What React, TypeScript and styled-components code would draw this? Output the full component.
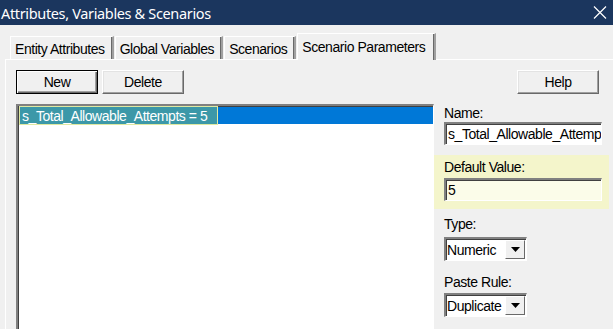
import React from "react";
import styled, { createGlobalStyle } from "styled-components";

const GlobalStyle = createGlobalStyle`
  html, body {
    margin: 0;
    padding: 0;
    background: #f0f0f0;
    overflow: hidden;
  }
`;

const Window = styled.div`
  width: 613px;
  height: 329px;
  display: flex;
  flex-direction: column;
  background: #f0f0f0;
  font-family: "Liberation Sans", Arial, sans-serif;
  font-size: 14px;
  letter-spacing: -0.45px;
  color: #000;
  overflow: hidden;
`;

const TitleBar = styled.div`
  height: 25px;
  flex: none;
  background: #1b365e;
  color: #fff;
  display: flex;
  align-items: center;
  justify-content: space-between;
  padding: 0 6px 0 1px;
  font-family: "Noto Sans", "Open Sans", sans-serif;
  font-size: 14.5px;
  letter-spacing: -0.35px;
`;

const CloseIcon = () => (
  <svg width="14" height="13" viewBox="0 0 14 13">
    <path d="M1 0.5 L13 12.5 M13 0.5 L1 12.5" stroke="#fff" strokeWidth="1.2" />
  </svg>
);

const Body = styled.div`
  flex: 1;
  display: flex;
  flex-direction: column;
  padding: 8px 0 0 5px;
  min-height: 0;
`;

const TabStrip = styled.div`
  height: 26px;
  flex: none;
  display: flex;
  align-items: flex-end;
  padding-left: 5px;
  position: relative;
  z-index: 1;
`;

const Tab = styled.div<{ $active?: boolean }>`
  box-sizing: border-box;
  height: ${(p) => (p.$active ? "27px" : "23px")};
  margin-bottom: ${(p) => (p.$active ? "-1px" : "0")};
  padding: ${(p) => (p.$active ? "0 9px 0 4px" : "2px 7px 0 4px")};
  margin-right: ${(p) => (p.$active ? "0" : "1px")};
  display: flex;
  align-items: center;
  background: #f0f0f0;
  border-top: 1px solid #fff;
  border-left: 1px solid #fff;
  border-right: 2px solid #a0a0a0;
  box-shadow: inset -1px 0 0 #696969;
  white-space: nowrap;
`;

const TabPanel = styled.div`
  flex: 1;
  display: flex;
  flex-direction: column;
  border-top: 1px solid #fff;
  border-left: 1px solid #fff;
  padding: 10px 0 0 10px;
  min-height: 0;
`;

const ToolRow = styled.div`
  display: flex;
  align-items: center;
  gap: 4px;
  padding-right: 14px;
`;

const Spacer = styled.div`
  flex: 1;
`;

const Button = styled.div<{ $default?: boolean }>`
  box-sizing: border-box;
  width: 82px;
  height: 24px;
  display: flex;
  align-items: center;
  justify-content: center;
  background: #f0f0f0;
  border: 1px solid ${(p) => (p.$default ? "#000" : "#fff")};
  border-right-color: ${(p) => (p.$default ? "#000" : "#696969")};
  border-bottom-color: ${(p) => (p.$default ? "#000" : "#696969")};
  box-shadow: ${(p) =>
    p.$default
      ? "inset 1px 1px 0 #fff, inset -1px -1px 0 #696969, inset -2px -2px 0 #a0a0a0"
      : "inset -1px -1px 0 #a0a0a0, inset 1px 1px 0 #e3e3e3"};
`;

const ContentRow = styled.div`
  flex: 1;
  display: flex;
  margin-top: 10px;
  min-height: 0;
`;

const ListBox = styled.div`
  box-sizing: border-box;
  width: 418px;
  flex: none;
  background: #fff;
  border-top: 2px solid #808080;
  border-left: 2px solid #808080;
  border-right: 1px solid #fff;
  box-shadow: inset 1px 1px 0 #404040;
  padding: 1px 0 0 2px;
  margin-bottom: -10px;
`;

const ListRow = styled.div<{ $selected?: boolean }>`
  height: 17px;
  display: flex;
  background: ${(p) => (p.$selected ? "#0078d7" : "transparent")};
  color: ${(p) => (p.$selected ? "#fff" : "#000")};
`;

const ListText = styled.span`
  display: flex;
  align-items: center;
  padding: 0 10px 0 2px;
  background: #3c98a8;
  box-shadow: 0 0 0 1px #dfe9a2;
  white-space: nowrap;
`;

const Side = styled.div`
  flex: 1;
  display: flex;
  flex-direction: column;
  padding: 0 4px 0 0;
`;

const Field = styled.div<{ $highlight?: boolean; $gap?: number; $after?: number }>`
  display: flex;
  flex-direction: column;
  align-items: flex-start;
  gap: ${(p) => p.$gap ?? 0}px;
  padding: ${(p) => (p.$highlight ? "3px 0 8px 10px" : "0 0 0 10px")};
  margin-bottom: ${(p) => p.$after ?? 0}px;
  background: ${(p) => (p.$highlight ? "#f4f5cb" : "transparent")};
`;

const Label = styled.div`
  height: 18px;
  line-height: 18px;
`;

const TextBox = styled.div<{ $tint?: boolean }>`
  box-sizing: border-box;
  width: 158px;
  height: 23px;
  display: flex;
  align-items: center;
  padding-left: 2px;
  overflow: hidden;
  white-space: nowrap;
  background: ${(p) => (p.$tint ? "#fbfce9" : "#fff")};
  border-top: 2px solid #808080;
  border-left: 2px solid #808080;
  border-right: 1px solid #fff;
  border-bottom: 1px solid #fff;
  box-shadow: inset 1px 1px 0 #404040;
`;

const Combo = styled.div`
  box-sizing: border-box;
  width: 83px;
  height: 24px;
  display: flex;
  align-items: stretch;
  background: #fff;
  border-top: 2px solid #808080;
  border-left: 2px solid #808080;
  border-right: 1px solid #fff;
  border-bottom: 1px solid #fff;
  box-shadow: inset 1px 1px 0 #404040;
`;

const ComboText = styled.div`
  flex: 1;
  display: flex;
  align-items: center;
  padding-left: 1px;
  overflow: hidden;
  white-space: nowrap;
`;

const ComboArrow = styled.div`
  width: 18px;
  margin: 1px 1px 1px 0;
  display: flex;
  align-items: center;
  justify-content: center;
  background: #f0f0f0;
  border: 1px solid #fff;
  border-right-color: #696969;
  border-bottom-color: #696969;
`;

const Arrow = () => (
  <svg width="9" height="5" viewBox="0 0 9 5">
    <path d="M0 0 H9 L4.5 5 Z" fill="#000" />
  </svg>
);

export default function App() {
  return (
    <>
      <GlobalStyle />
      <Window>
        <TitleBar>
          <span>Attributes, Variables &amp; Scenarios</span>
          <CloseIcon />
        </TitleBar>
        <Body>
          <TabStrip>
            <Tab>Entity Attributes</Tab>
            <Tab>Global Variables</Tab>
            <Tab>Scenarios</Tab>
            <Tab $active>Scenario Parameters</Tab>
          </TabStrip>
          <TabPanel>
            <ToolRow>
              <Button $default>New</Button>
              <Button>Delete</Button>
              <Spacer />
              <Button>Help</Button>
            </ToolRow>
            <ContentRow>
              <ListBox>
                <ListRow $selected>
                  <ListText>s_Total_Allowable_Attempts = 5</ListText>
                </ListRow>
              </ListBox>
              <Side>
                <Field $after={10}>
                  <Label>Name:</Label>
                  <TextBox>s_Total_Allowable_Attempts</TextBox>
                </Field>
                <Field $highlight $gap={2} $after={6}>
                  <Label>Default Value:</Label>
                  <TextBox $tint>5</TextBox>
                </Field>
                <Field $gap={4} $after={12}>
                  <Label>Type:</Label>
                  <Combo>
                    <ComboText>Numeric</ComboText>
                    <ComboArrow>
                      <Arrow />
                    </ComboArrow>
                  </Combo>
                </Field>
                <Field $gap={2}>
                  <Label>Paste Rule:</Label>
                  <Combo>
                    <ComboText>Duplicate</ComboText>
                    <ComboArrow>
                      <Arrow />
                    </ComboArrow>
                  </Combo>
                </Field>
              </Side>
            </ContentRow>
          </TabPanel>
        </Body>
      </Window>
    </>
  );
}
